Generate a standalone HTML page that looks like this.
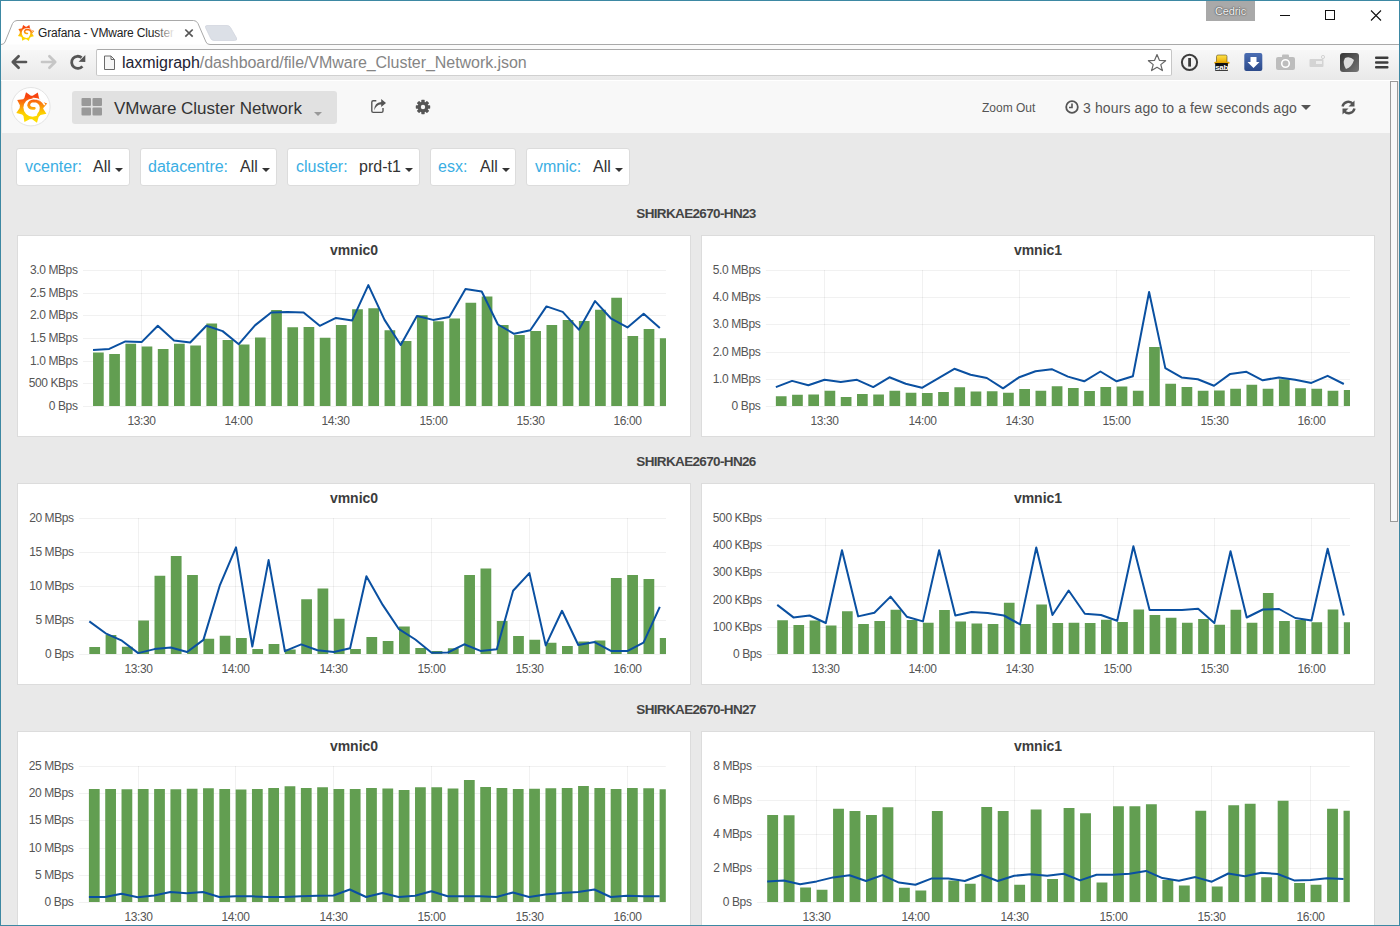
<!DOCTYPE html>
<html><head><meta charset="utf-8">
<style>
html,body{margin:0;padding:0;}
body{width:1400px;height:926px;overflow:hidden;position:relative;background:#fff;font-family:"Liberation Sans",sans-serif;}
.a{position:absolute;}
#win{left:0;top:0;width:1398px;height:924px;border:1px solid #2b7795;}
#toolbar{left:1px;top:44px;width:1398px;height:36px;background:linear-gradient(#fafafa,#e9e9e9);}
#tbline{left:1px;top:80px;width:1398px;height:1px;background:#a3a3a3;}
#addr{left:96px;top:49px;width:1075.5px;height:27px;background:#fff;border:1px solid #c6c6c6;border-top-color:#a9a9a9;border-bottom-color:#d0d0d0;border-radius:2px;box-sizing:border-box;}
#url{left:122px;top:54px;font-size:16px;color:#858585;white-space:nowrap;letter-spacing:-0.05px;}
#url b{font-weight:normal;color:#222233;}
#nav{left:1px;top:81px;width:1389px;height:52px;background:#f8f8f8;}
#dash{left:1px;top:133px;width:1389px;height:792px;background:#e9e9e9;}
#sb{left:1390px;top:81px;width:9px;height:844px;background:#e9e9e9;}
#thumb{left:1390px;top:81px;width:8px;height:441px;background:#f8f8f8;border:1px solid #9a9a9a;border-left-width:1px;box-sizing:border-box;}
.var{top:148px;height:38px;background:#fff;border:1px solid #dcdcdc;border-radius:3px;box-sizing:border-box;font-size:16px;white-space:nowrap;}
.var .l{position:absolute;top:9px;color:#3aaee3;}
.var .v{position:absolute;top:9px;color:#333;}
.caret{position:absolute;width:0;height:0;border-left:4px solid transparent;border-right:4px solid transparent;border-top:4px solid #333;}
svg text{font-family:"Liberation Sans",sans-serif;}
.pt{font-size:14px;font-weight:bold;fill:#3c3c3c;}
.yl{font-size:12px;fill:#555;letter-spacing:-0.4px;}
.g{stroke:rgba(0,0,0,0.056);stroke-width:1;}
.st{font-size:13.5px;font-weight:bold;fill:#444;letter-spacing:-0.65px;}
</style></head><body>
<div class="a" id="win"></div>
<!-- title bar & tabs -->
<div class="a" id="toolbar"></div>
<svg class="a" style="left:0;top:0" width="1400" height="50">
  <path d="M1 44.5 Q4 44.5 5 42 L12.5 23.5 Q14 20.5 17 20.5 H193.5 Q196.5 20.5 198 23.5 L206 42 Q207 44.5 210 44.5 H1399 V60 H1 Z" fill="#fbfbfb" stroke="none"/>
  <path d="M1 44.5 Q4 44.5 5 42 L12.5 23.5 Q14 20.5 17 20.5 H193.5 Q196.5 20.5 198 23.5 L206 42 Q207 44.5 210 44.5 H1399" fill="#fff" stroke="#a9a9a9" stroke-width="1"/>
  <path d="M207 25.5 H227 Q229.5 25.5 230.5 27.5 L236.5 38 Q237.5 40.5 234.5 40.5 H214 Q211.5 40.5 210.5 38 L205.5 27.5 Q205 25.5 207 25.5 Z" fill="#dce0e7" stroke="#d2d6de" stroke-width="0.8"/>
  <rect x="1206" y="1" width="49" height="20" fill="#a9a9a9"/>
    <line x1="1280" x2="1290" y1="15.5" y2="15.5" stroke="#111" stroke-width="1"/>
  <rect x="1325.5" y="10.5" width="9" height="9" fill="none" stroke="#111" stroke-width="1"/>
  <path d="M1371 10.5 L1381 20.5 M1381 10.5 L1371 20.5" stroke="#111" stroke-width="1.1"/>
</svg>
<div class="a" style="left:1206px;top:5px;width:49px;text-align:center;font-size:11px;letter-spacing:-0.1px;color:#f4f4f4;text-shadow:0 0 2px #555,0 0 1px #333;">Cedric</div>
<div class="a" style="left:38px;top:26px;font-size:12px;color:#222;white-space:nowrap;width:138px;overflow:hidden;letter-spacing:-0.15px;">Grafana - VMware Cluster</div>
<div class="a" style="left:155px;top:24px;width:22px;height:18px;background:linear-gradient(90deg,rgba(255,255,255,0),#fff 90%);"></div>
<svg class="a" style="left:183px;top:27px" width="12" height="12"><path d="M2.3 2.5 L9.7 9.7 M9.7 2.5 L2.3 9.7" stroke="#555" stroke-width="1.7"/></svg>
<svg class="a" style="left:17px;top:24px" width="18" height="18" viewBox="4.5 4.5 34 34">
<defs><linearGradient id="gf1" gradientUnits="userSpaceOnUse" x1="0" y1="6" x2="0" y2="37"><stop offset="0.15" stop-color="#f8440f"/><stop offset="0.42" stop-color="#fb8a0c"/><stop offset="0.68" stop-color="#fcd000"/><stop offset="1" stop-color="#fde000"/></linearGradient></defs>
<path d="M9.9 19.2 L7.2 13.9 L13.2 13.2 L14.4 12.1 L16.0 6.3 L20.9 9.7 L22.7 9.8 L27.8 6.6 L29.1 12.5 L31.6 15.4 L37.2 17.6 L33.3 22.1 L33.2 22.7 L36.4 27.8 L30.5 29.1 L28.6 30.9 L27.0 36.7 L22.1 33.3 L19.7 33.2 L14.4 36.1 L13.5 30.1 L12.1 28.6 L6.3 27.0 L9.7 22.1Z" fill="url(#gf1)"/>
<circle cx="22.6" cy="21.6" r="9.2" fill="#fff"/>
<path d="M22.6 12.6 Q30.5 12 34.8 19" fill="none" stroke="#fff" stroke-width="1.5"/>
<path d="M24.3 22.3 Q19.5 23 18.6 19.2 Q19.5 15 23.5 14.9 Q30.5 15 31.2 21.5 Q31.2 26 28.5 28.5" fill="none" stroke="url(#gf1)" stroke-width="2.8" stroke-linecap="round"/>
</svg>
<!-- nav buttons -->
<svg class="a" style="left:0;top:44px" width="100" height="36">
  <path d="M13.5 18 H26 M18.6 12.2 L12.8 18 L18.6 23.8" fill="none" stroke="#555" stroke-width="2.7" stroke-linecap="round" stroke-linejoin="round"/>
  <path d="M42 18 H54.5 M49.4 12.2 L55.2 18 L49.4 23.8" fill="none" stroke="#c6c6c6" stroke-width="2.7" stroke-linecap="round" stroke-linejoin="round"/>
  <path d="M81.6 13.6 A6.1 6.1 0 1 0 82.4 22.3" fill="none" stroke="#555" stroke-width="2.8"/>
  <path d="M78.6 17.7 L85.3 11 L85.3 17.9 Z" fill="#555"/>
</svg>
<div class="a" id="addr"></div>
<svg class="a" style="left:102px;top:53px" width="16" height="20">
  <path d="M2.5 3 H9 L12.5 6.5 V16.5 H2.5 Z" fill="#f6f6f6" stroke="#6a6a6a" stroke-width="1"/>
  <path d="M9 3 V6.5 H12.5" fill="none" stroke="#6a6a6a" stroke-width="1"/>
</svg>
<div class="a" id="url"><b>laxmigraph</b>/dashboard/file/VMware_Cluster_Network.json</div>
<svg class="a" style="left:1146px;top:52px" width="22" height="22">
  <path d="M11 2.5 L13.4 8.3 L19.6 8.7 L14.8 12.6 L16.4 18.6 L11 15.3 L5.6 18.6 L7.2 12.6 L2.4 8.7 L8.6 8.3 Z" fill="#fff" stroke="#666" stroke-width="1.2" stroke-linejoin="round"/>
</svg>
<!-- extension icons -->
<svg class="a" style="left:1170px;top:44px" width="230" height="36">
  <circle cx="19.5" cy="18.3" r="7.6" fill="none" stroke="#3c3c3c" stroke-width="2"/>
  <rect x="18.2" y="14" width="2.8" height="8.6" fill="#3c3c3c"/>
  <defs><linearGradient id="sy" x1="0" y1="0" x2="0" y2="1"><stop offset="0" stop-color="#ffe34a"/><stop offset="1" stop-color="#e8a800"/></linearGradient></defs>
  <path d="M46.5 19 V12.5 Q46.5 11 48 11 H55.5 Q57 11 57 12.5 V19 Z" fill="url(#sy)" stroke="#3a2a00" stroke-width="0.5"/>
  <rect x="44.2" y="17.8" width="15.4" height="2" rx="1" fill="#e0a000"/>
  <rect x="45.2" y="19" width="12.7" height="7.8" fill="#111"/>
  <text x="51.6" y="25.6" text-anchor="middle" font-size="8" font-weight="bold" fill="#fff" letter-spacing="-0.3">sab</text>
  <defs><linearGradient id="bl" x1="0" y1="0" x2="0" y2="1"><stop offset="0" stop-color="#4a6db3"/><stop offset="1" stop-color="#2c4a8a"/></linearGradient><linearGradient id="dk" x1="0" y1="0" x2="1" y2="1"><stop offset="0" stop-color="#333"/><stop offset="1" stop-color="#777"/></linearGradient></defs><rect x="74.3" y="9" width="18" height="18" rx="2" fill="url(#bl)"/>
  <path d="M80.5 13 H86.5 V18 H89.5 L83.5 24 L77.5 18 H80.5 Z" fill="#fff"/>
  <rect x="106" y="13" width="19" height="13" rx="2" fill="#bdbdbd"/>
  <rect x="112" y="10.5" width="7" height="4" rx="1" fill="#bdbdbd"/>
  <circle cx="115.5" cy="19.5" r="3.8" fill="none" stroke="#fff" stroke-width="1.6"/>
  <rect x="139.5" y="15" width="14" height="8" rx="1" fill="#d4d4d4"/>
  <rect x="146" y="17" width="6" height="3" fill="#eee"/>
  <circle cx="153" cy="13" r="1.6" fill="none" stroke="#d4d4d4" stroke-width="1"/>
  <rect x="170" y="9" width="19" height="19" rx="3" fill="url(#dk)"/>
  <path d="M175 14 Q180 12 184 16 Q182 23 176 25 Q172 19 175 14 Z" fill="#ddd"/>
  <rect x="205" y="12.5" width="13.5" height="2.5" rx="1" fill="#3c3c3c"/>
  <rect x="205" y="17.3" width="13.5" height="2.5" rx="1" fill="#3c3c3c"/>
  <rect x="205" y="22.1" width="13.5" height="2.5" rx="1" fill="#3c3c3c"/>
</svg>
<!-- grafana navbar -->
<div class="a" id="nav"></div>
<svg class="a" style="left:10px;top:86px" width="42" height="42" viewBox="0 0 42 42">
  <circle cx="20.9" cy="20.7" r="19.2" fill="#fff" stroke="#e4e4e4" stroke-width="1"/>
<defs><linearGradient id="gf2" gradientUnits="userSpaceOnUse" x1="0" y1="6" x2="0" y2="37"><stop offset="0.15" stop-color="#f8440f"/><stop offset="0.42" stop-color="#fb8a0c"/><stop offset="0.68" stop-color="#fcd000"/><stop offset="1" stop-color="#fde000"/></linearGradient></defs>
<path d="M9.9 19.2 L7.2 13.9 L13.2 13.2 L14.4 12.1 L16.0 6.3 L20.9 9.7 L22.7 9.8 L27.8 6.6 L29.1 12.5 L31.6 15.4 L37.2 17.6 L33.3 22.1 L33.2 22.7 L36.4 27.8 L30.5 29.1 L28.6 30.9 L27.0 36.7 L22.1 33.3 L19.7 33.2 L14.4 36.1 L13.5 30.1 L12.1 28.6 L6.3 27.0 L9.7 22.1Z" fill="url(#gf2)"/>
<circle cx="22.6" cy="21.6" r="9.2" fill="#fff"/>
<path d="M22.6 12.6 Q30.5 12 34.8 19" fill="none" stroke="#fff" stroke-width="1.5"/>
<path d="M24.3 22.3 Q19.5 23 18.6 19.2 Q19.5 15 23.5 14.9 Q30.5 15 31.2 21.5 Q31.2 26 28.5 28.5" fill="none" stroke="url(#gf2)" stroke-width="2.8" stroke-linecap="round"/>
</svg>
<div class="a" style="left:72px;top:91px;width:265px;height:33px;background:#e1e1e1;border-radius:3px;"></div>
<svg class="a" style="left:81px;top:97px" width="24" height="20">
  <rect x="0.5" y="1" width="9.5" height="8" rx="1" fill="#999"/>
  <rect x="11.5" y="1" width="9.5" height="8" rx="1" fill="#999"/>
  <rect x="0.5" y="10.5" width="9.5" height="8" rx="1" fill="#999"/>
  <rect x="11.5" y="10.5" width="9.5" height="8" rx="1" fill="#999"/>
</svg>
<div class="a" style="left:114px;top:99px;font-size:17px;color:#333;white-space:nowrap;">VMware Cluster Network</div>
<div class="caret a" style="left:314px;top:111.5px;border-top-color:#999;border-left-width:4px;border-right-width:4px;border-top-width:4px;"></div>
<svg class="a" style="left:368px;top:97px" width="20" height="20">
  <path d="M8.3 3.8 H5.2 Q3.8 3.8 3.8 5.2 V14 Q3.8 15.4 5.2 15.4 H13.6 Q15 15.4 15 14 V11" fill="none" stroke="#555" stroke-width="1.4"/>
  <path d="M6.2 13.4 Q6.3 5.6 13.2 5.1 V2.1 L18 6.1 L13.2 10.1 V7.5 Q8.6 7.4 6.2 13.4 Z" fill="#555"/>
</svg>
<svg class="a" style="left:414px;top:98px" width="18" height="18" viewBox="0 0 18 18">
  <g fill="#555" transform="translate(9 9)">
    <circle r="5.3"/>
    <rect x="-1.7" y="-7.2" width="3.4" height="14.4" rx="0.6"/>
    <rect x="-1.7" y="-7.2" width="3.4" height="14.4" rx="0.6" transform="rotate(45)"/>
    <rect x="-1.7" y="-7.2" width="3.4" height="14.4" rx="0.6" transform="rotate(90)"/>
    <rect x="-1.7" y="-7.2" width="3.4" height="14.4" rx="0.6" transform="rotate(135)"/>
  </g>
  <circle cx="9" cy="9" r="2.2" fill="#f8f8f8"/>
</svg>
<div class="a" style="left:982px;top:101px;font-size:12px;color:#555;white-space:nowrap;">Zoom Out</div>
<svg class="a" style="left:1064px;top:99px" width="16" height="16">
  <circle cx="8" cy="8" r="5.8" fill="none" stroke="#555" stroke-width="1.8"/>
  <path d="M8 4.5 V8.5 H5" fill="none" stroke="#555" stroke-width="1.6"/>
</svg>
<div class="a" style="left:1083px;top:100px;font-size:14px;color:#555;white-space:nowrap;letter-spacing:0.12px;">3 hours ago to a few seconds ago</div>
<div class="caret a" style="left:1301px;top:105px;border-left-width:5px;border-right-width:5px;border-top-width:5px;border-top-color:#555;"></div>
<svg class="a" style="left:1340px;top:99px" width="17" height="17" viewBox="0 0 17 17">
  <path d="M2.5 7.5 A6 6 0 0 1 13 5" fill="none" stroke="#555" stroke-width="2.4"/>
  <path d="M14.5 1.5 V7.5 H8.5 Z" fill="#555"/>
  <path d="M14.5 9.5 A6 6 0 0 1 4 12" fill="none" stroke="#555" stroke-width="2.4"/>
  <path d="M2.5 15.5 V9.5 H8.5 Z" fill="#555"/>
</svg>
<!-- dashboard -->
<div class="a" id="dash"></div>
<div class="a var" style="left:16px;width:114px;"><span class="l" style="left:8px">vcenter:</span><span class="v" style="left:76px">All</span><div class="caret" style="left:98px;top:19px"></div></div>
<div class="a var" style="left:140px;width:137px;"><span class="l" style="left:7px">datacentre:</span><span class="v" style="left:99px">All</span><div class="caret" style="left:121px;top:19px"></div></div>
<div class="a var" style="left:287px;width:133px;"><span class="l" style="left:8px">cluster:</span><span class="v" style="left:71px">prd-t1</span><div class="caret" style="left:117px;top:19px"></div></div>
<div class="a var" style="left:430px;width:86px;"><span class="l" style="left:7px">esx:</span><span class="v" style="left:49px">All</span><div class="caret" style="left:71px;top:19px"></div></div>
<div class="a var" style="left:526px;width:104px;"><span class="l" style="left:8px">vmnic:</span><span class="v" style="left:66px">All</span><div class="caret" style="left:88px;top:19px"></div></div>
<svg class="a" style="left:0;top:0" width="1390" height="926">
<text x="696" y="218" class="st" text-anchor="middle">SHIRKAE2670-HN23</text>
<text x="696" y="466" class="st" text-anchor="middle">SHIRKAE2670-HN26</text>
<text x="696" y="714" class="st" text-anchor="middle">SHIRKAE2670-HN27</text>
<rect x="17.5" y="235.5" width="673" height="201.0" fill="#fff" stroke="#dcdcdc" stroke-width="1"/>
<text x="354.0" y="255.0" class="pt" text-anchor="middle">vmnic0</text>
<line x1="83" x2="666" y1="270.5" y2="270.5" class="g"/>
<text x="77.5" y="273.8" class="yl" text-anchor="end">3.0 MBps</text>
<line x1="83" x2="666" y1="293.5" y2="293.5" class="g"/>
<text x="77.5" y="296.8" class="yl" text-anchor="end">2.5 MBps</text>
<line x1="83" x2="666" y1="315.5" y2="315.5" class="g"/>
<text x="77.5" y="318.8" class="yl" text-anchor="end">2.0 MBps</text>
<line x1="83" x2="666" y1="338.5" y2="338.5" class="g"/>
<text x="77.5" y="341.8" class="yl" text-anchor="end">1.5 MBps</text>
<line x1="83" x2="666" y1="361.5" y2="361.5" class="g"/>
<text x="77.5" y="364.8" class="yl" text-anchor="end">1.0 MBps</text>
<line x1="83" x2="666" y1="383.5" y2="383.5" class="g"/>
<text x="77.5" y="386.8" class="yl" text-anchor="end">500 KBps</text>
<line x1="83" x2="666" y1="406.5" y2="406.5" class="g"/>
<text x="77.5" y="409.8" class="yl" text-anchor="end">0 Bps</text>
<line x1="141.5" x2="141.5" y1="270" y2="406" class="g"/>
<text x="141.5" y="425" class="yl" text-anchor="middle">13:30</text>
<line x1="238.5" x2="238.5" y1="270" y2="406" class="g"/>
<text x="238.5" y="425" class="yl" text-anchor="middle">14:00</text>
<line x1="335.5" x2="335.5" y1="270" y2="406" class="g"/>
<text x="335.5" y="425" class="yl" text-anchor="middle">14:30</text>
<line x1="433.5" x2="433.5" y1="270" y2="406" class="g"/>
<text x="433.5" y="425" class="yl" text-anchor="middle">15:00</text>
<line x1="530.5" x2="530.5" y1="270" y2="406" class="g"/>
<text x="530.5" y="425" class="yl" text-anchor="middle">15:30</text>
<line x1="627.5" x2="627.5" y1="270" y2="406" class="g"/>
<text x="627.5" y="425" class="yl" text-anchor="middle">16:00</text>
<path d="M93.04 352.60h10.69V406h-10.69ZM109.23 353.90h10.69V406h-10.69ZM125.43 343.80h10.69V406h-10.69ZM141.62 346.40h10.69V406h-10.69ZM157.82 349.10h10.69V406h-10.69ZM174.01 343.80h10.69V406h-10.69ZM190.21 345.50h10.69V406h-10.69ZM206.40 323.60h10.69V406h-10.69ZM222.60 340.10h10.69V406h-10.69ZM238.79 344.40h10.69V406h-10.69ZM254.99 337.60h10.69V406h-10.69ZM271.18 309.90h10.69V406h-10.69ZM287.37 327.30h10.69V406h-10.69ZM303.57 326.90h10.69V406h-10.69ZM319.76 337.80h10.69V406h-10.69ZM335.96 325.10h10.69V406h-10.69ZM352.15 309.30h10.69V406h-10.69ZM368.35 308.20h10.69V406h-10.69ZM384.54 330.20h10.69V406h-10.69ZM400.74 340.90h10.69V406h-10.69ZM416.93 315.30h10.69V406h-10.69ZM433.12 321.30h10.69V406h-10.69ZM449.32 318.50h10.69V406h-10.69ZM465.51 302.70h10.69V406h-10.69ZM481.71 296.60h10.69V406h-10.69ZM497.90 325.10h10.69V406h-10.69ZM514.10 335.00h10.69V406h-10.69ZM530.29 331.10h10.69V406h-10.69ZM546.49 324.90h10.69V406h-10.69ZM562.68 320.10h10.69V406h-10.69ZM578.87 321.00h10.69V406h-10.69ZM595.07 309.80h10.69V406h-10.69ZM611.26 297.70h10.69V406h-10.69ZM627.46 336.10h10.69V406h-10.69ZM643.65 329.00h10.69V406h-10.69ZM659.85 338.20h6.15V406h-6.15Z" fill="#629e51"/>
<polyline points="93.04,350.00 109.23,348.90 125.43,341.40 141.62,342.10 157.82,325.80 174.01,340.40 190.21,342.50 206.40,325.80 222.60,331.10 238.79,344.20 254.99,325.40 271.18,312.50 287.37,312.10 303.57,312.50 319.76,325.80 335.96,317.90 352.15,320.40 368.35,285.10 384.54,319.90 400.74,345.00 416.93,316.00 433.12,319.90 449.32,317.10 465.51,289.00 481.71,291.50 497.90,324.50 514.10,333.80 530.29,330.20 546.49,306.40 562.68,311.90 578.87,329.70 595.07,301.10 611.26,318.70 627.46,327.40 643.65,313.70 659.85,327.90" fill="none" stroke="#0a50a1" stroke-width="2" stroke-linejoin="round"/>
<rect x="701.5" y="235.5" width="673" height="201.0" fill="#fff" stroke="#dcdcdc" stroke-width="1"/>
<text x="1038.0" y="255.0" class="pt" text-anchor="middle">vmnic1</text>
<line x1="765.8" x2="1350" y1="270.5" y2="270.5" class="g"/>
<text x="760.3" y="273.8" class="yl" text-anchor="end">5.0 MBps</text>
<line x1="765.8" x2="1350" y1="297.5" y2="297.5" class="g"/>
<text x="760.3" y="300.8" class="yl" text-anchor="end">4.0 MBps</text>
<line x1="765.8" x2="1350" y1="324.5" y2="324.5" class="g"/>
<text x="760.3" y="327.8" class="yl" text-anchor="end">3.0 MBps</text>
<line x1="765.8" x2="1350" y1="352.5" y2="352.5" class="g"/>
<text x="760.3" y="355.8" class="yl" text-anchor="end">2.0 MBps</text>
<line x1="765.8" x2="1350" y1="379.5" y2="379.5" class="g"/>
<text x="760.3" y="382.8" class="yl" text-anchor="end">1.0 MBps</text>
<line x1="765.8" x2="1350" y1="406.5" y2="406.5" class="g"/>
<text x="760.3" y="409.8" class="yl" text-anchor="end">0 Bps</text>
<line x1="824.5" x2="824.5" y1="270" y2="406" class="g"/>
<text x="824.5" y="425" class="yl" text-anchor="middle">13:30</text>
<line x1="922.5" x2="922.5" y1="270" y2="406" class="g"/>
<text x="922.5" y="425" class="yl" text-anchor="middle">14:00</text>
<line x1="1019.5" x2="1019.5" y1="270" y2="406" class="g"/>
<text x="1019.5" y="425" class="yl" text-anchor="middle">14:30</text>
<line x1="1116.5" x2="1116.5" y1="270" y2="406" class="g"/>
<text x="1116.5" y="425" class="yl" text-anchor="middle">15:00</text>
<line x1="1214.5" x2="1214.5" y1="270" y2="406" class="g"/>
<text x="1214.5" y="425" class="yl" text-anchor="middle">15:30</text>
<line x1="1311.5" x2="1311.5" y1="270" y2="406" class="g"/>
<text x="1311.5" y="425" class="yl" text-anchor="middle">16:00</text>
<path d="M775.86 396.30h10.71V406h-10.71ZM792.09 394.70h10.71V406h-10.71ZM808.32 394.40h10.71V406h-10.71ZM824.54 390.80h10.71V406h-10.71ZM840.77 396.90h10.71V406h-10.71ZM857.00 394.00h10.71V406h-10.71ZM873.23 394.40h10.71V406h-10.71ZM889.46 390.80h10.71V406h-10.71ZM905.68 392.80h10.71V406h-10.71ZM921.91 393.10h10.71V406h-10.71ZM938.14 392.10h10.71V406h-10.71ZM954.37 387.30h10.71V406h-10.71ZM970.59 391.50h10.71V406h-10.71ZM986.82 391.20h10.71V406h-10.71ZM1003.05 392.80h10.71V406h-10.71ZM1019.28 389.10h10.71V406h-10.71ZM1035.51 390.80h10.71V406h-10.71ZM1051.73 386.30h10.71V406h-10.71ZM1067.96 387.90h10.71V406h-10.71ZM1084.19 391.10h10.71V406h-10.71ZM1100.42 386.90h10.71V406h-10.71ZM1116.64 386.60h10.71V406h-10.71ZM1132.87 390.80h10.71V406h-10.71ZM1149.10 347.00h10.71V406h-10.71ZM1165.33 383.70h10.71V406h-10.71ZM1181.56 386.90h10.71V406h-10.71ZM1197.78 390.80h10.71V406h-10.71ZM1214.01 390.60h10.71V406h-10.71ZM1230.24 388.70h10.71V406h-10.71ZM1246.47 384.80h10.71V406h-10.71ZM1262.69 388.70h10.71V406h-10.71ZM1278.92 379.20h10.71V406h-10.71ZM1295.15 388.20h10.71V406h-10.71ZM1311.38 388.70h10.71V406h-10.71ZM1327.61 390.80h10.71V406h-10.71ZM1343.83 390.00h6.17V406h-6.17Z" fill="#629e51"/>
<polyline points="775.86,387.10 792.09,380.90 808.32,385.30 824.54,379.80 840.77,382.10 857.00,379.80 873.23,387.10 889.46,377.30 905.68,383.70 921.91,387.80 938.14,378.40 954.37,368.80 970.59,374.80 986.82,378.00 1003.05,388.30 1019.28,377.20 1035.51,371.30 1051.73,369.20 1067.96,376.60 1084.19,381.30 1100.42,371.50 1116.64,381.30 1132.87,376.30 1149.10,292.00 1165.33,368.10 1181.56,377.40 1197.78,379.20 1214.01,385.80 1230.24,373.90 1246.47,371.80 1262.69,380.30 1278.92,377.40 1295.15,379.70 1311.38,382.90 1327.61,375.80 1343.83,384.00" fill="none" stroke="#0a50a1" stroke-width="2" stroke-linejoin="round"/>
<rect x="17.5" y="483.5" width="673" height="201.0" fill="#fff" stroke="#dcdcdc" stroke-width="1"/>
<text x="354.0" y="503.0" class="pt" text-anchor="middle">vmnic0</text>
<line x1="79.2" x2="666" y1="518.5" y2="518.5" class="g"/>
<text x="73.7" y="521.8" class="yl" text-anchor="end">20 MBps</text>
<line x1="79.2" x2="666" y1="552.5" y2="552.5" class="g"/>
<text x="73.7" y="555.8" class="yl" text-anchor="end">15 MBps</text>
<line x1="79.2" x2="666" y1="586.5" y2="586.5" class="g"/>
<text x="73.7" y="589.8" class="yl" text-anchor="end">10 MBps</text>
<line x1="79.2" x2="666" y1="620.5" y2="620.5" class="g"/>
<text x="73.7" y="623.8" class="yl" text-anchor="end">5 MBps</text>
<line x1="79.2" x2="666" y1="654.5" y2="654.5" class="g"/>
<text x="73.7" y="657.8" class="yl" text-anchor="end">0 Bps</text>
<line x1="138.5" x2="138.5" y1="518" y2="654" class="g"/>
<text x="138.5" y="673" class="yl" text-anchor="middle">13:30</text>
<line x1="235.5" x2="235.5" y1="518" y2="654" class="g"/>
<text x="235.5" y="673" class="yl" text-anchor="middle">14:00</text>
<line x1="333.5" x2="333.5" y1="518" y2="654" class="g"/>
<text x="333.5" y="673" class="yl" text-anchor="middle">14:30</text>
<line x1="431.5" x2="431.5" y1="518" y2="654" class="g"/>
<text x="431.5" y="673" class="yl" text-anchor="middle">15:00</text>
<line x1="529.5" x2="529.5" y1="518" y2="654" class="g"/>
<text x="529.5" y="673" class="yl" text-anchor="middle">15:30</text>
<line x1="627.5" x2="627.5" y1="518" y2="654" class="g"/>
<text x="627.5" y="673" class="yl" text-anchor="middle">16:00</text>
<path d="M89.31 647.00h10.76V654h-10.76ZM105.61 634.90h10.76V654h-10.76ZM121.91 646.80h10.76V654h-10.76ZM138.21 620.60h10.76V654h-10.76ZM154.51 575.70h10.76V654h-10.76ZM170.81 556.10h10.76V654h-10.76ZM187.11 575.10h10.76V654h-10.76ZM203.41 638.80h10.76V654h-10.76ZM219.71 635.70h10.76V654h-10.76ZM236.01 638.00h10.76V654h-10.76ZM252.31 648.90h10.76V654h-10.76ZM268.61 644.10h10.76V654h-10.76ZM284.91 649.40h10.76V654h-10.76ZM301.21 599.20h10.76V654h-10.76ZM317.51 588.60h10.76V654h-10.76ZM333.81 618.70h10.76V654h-10.76ZM350.11 648.90h10.76V654h-10.76ZM366.41 637.00h10.76V654h-10.76ZM382.71 641.00h10.76V654h-10.76ZM399.01 626.60h10.76V654h-10.76ZM415.31 648.00h10.76V654h-10.76ZM431.61 650.90h10.76V654h-10.76ZM447.91 648.30h10.76V654h-10.76ZM464.21 575.00h10.76V654h-10.76ZM480.51 568.40h10.76V654h-10.76ZM496.81 620.90h10.76V654h-10.76ZM513.11 636.00h10.76V654h-10.76ZM529.41 639.80h10.76V654h-10.76ZM545.71 642.80h10.76V654h-10.76ZM562.01 645.90h10.76V654h-10.76ZM578.31 641.40h10.76V654h-10.76ZM594.61 640.50h10.76V654h-10.76ZM610.91 578.00h10.76V654h-10.76ZM627.21 575.00h10.76V654h-10.76ZM643.51 579.00h10.76V654h-10.76ZM659.81 638.10h6.19V654h-6.19Z" fill="#629e51"/>
<polyline points="89.31,621.40 105.61,633.30 121.91,640.70 138.21,653.10 154.51,649.10 170.81,647.50 187.11,652.00 203.41,639.90 219.71,585.70 236.01,547.40 252.31,646.50 268.61,560.10 284.91,651.20 301.21,644.40 317.51,650.20 333.81,652.00 350.11,648.30 366.41,576.30 382.71,604.90 399.01,629.20 415.31,639.50 431.61,652.70 447.91,652.50 464.21,644.30 480.51,650.90 496.81,649.20 513.11,590.80 529.41,573.10 545.71,645.40 562.01,610.80 578.31,645.00 594.61,642.10 610.91,650.90 627.21,651.10 643.51,642.60 659.81,606.80" fill="none" stroke="#0a50a1" stroke-width="2" stroke-linejoin="round"/>
<rect x="701.5" y="483.5" width="673" height="201.0" fill="#fff" stroke="#dcdcdc" stroke-width="1"/>
<text x="1038.0" y="503.0" class="pt" text-anchor="middle">vmnic1</text>
<line x1="767.2" x2="1350" y1="518.5" y2="518.5" class="g"/>
<text x="761.7" y="521.8" class="yl" text-anchor="end">500 KBps</text>
<line x1="767.2" x2="1350" y1="545.5" y2="545.5" class="g"/>
<text x="761.7" y="548.8" class="yl" text-anchor="end">400 KBps</text>
<line x1="767.2" x2="1350" y1="572.5" y2="572.5" class="g"/>
<text x="761.7" y="575.8" class="yl" text-anchor="end">300 KBps</text>
<line x1="767.2" x2="1350" y1="600.5" y2="600.5" class="g"/>
<text x="761.7" y="603.8" class="yl" text-anchor="end">200 KBps</text>
<line x1="767.2" x2="1350" y1="627.5" y2="627.5" class="g"/>
<text x="761.7" y="630.8" class="yl" text-anchor="end">100 KBps</text>
<line x1="767.2" x2="1350" y1="654.5" y2="654.5" class="g"/>
<text x="761.7" y="657.8" class="yl" text-anchor="end">0 Bps</text>
<line x1="825.5" x2="825.5" y1="518" y2="654" class="g"/>
<text x="825.5" y="673" class="yl" text-anchor="middle">13:30</text>
<line x1="922.5" x2="922.5" y1="518" y2="654" class="g"/>
<text x="922.5" y="673" class="yl" text-anchor="middle">14:00</text>
<line x1="1019.5" x2="1019.5" y1="518" y2="654" class="g"/>
<text x="1019.5" y="673" class="yl" text-anchor="middle">14:30</text>
<line x1="1117.5" x2="1117.5" y1="518" y2="654" class="g"/>
<text x="1117.5" y="673" class="yl" text-anchor="middle">15:00</text>
<line x1="1214.5" x2="1214.5" y1="518" y2="654" class="g"/>
<text x="1214.5" y="673" class="yl" text-anchor="middle">15:30</text>
<line x1="1311.5" x2="1311.5" y1="518" y2="654" class="g"/>
<text x="1311.5" y="673" class="yl" text-anchor="middle">16:00</text>
<path d="M777.24 620.20h10.68V654h-10.68ZM793.43 624.90h10.68V654h-10.68ZM809.61 620.40h10.68V654h-10.68ZM825.80 625.60h10.68V654h-10.68ZM841.99 611.30h10.68V654h-10.68ZM858.18 624.00h10.68V654h-10.68ZM874.37 620.90h10.68V654h-10.68ZM890.56 609.80h10.68V654h-10.68ZM906.75 620.00h10.68V654h-10.68ZM922.94 622.80h10.68V654h-10.68ZM939.13 610.10h10.68V654h-10.68ZM955.31 621.40h10.68V654h-10.68ZM971.50 623.50h10.68V654h-10.68ZM987.69 624.00h10.68V654h-10.68ZM1003.88 602.80h10.68V654h-10.68ZM1020.07 624.10h10.68V654h-10.68ZM1036.26 604.50h10.68V654h-10.68ZM1052.45 623.00h10.68V654h-10.68ZM1068.64 622.80h10.68V654h-10.68ZM1084.83 623.00h10.68V654h-10.68ZM1101.01 619.80h10.68V654h-10.68ZM1117.20 622.00h10.68V654h-10.68ZM1133.39 609.50h10.68V654h-10.68ZM1149.58 615.00h10.68V654h-10.68ZM1165.77 617.80h10.68V654h-10.68ZM1181.96 622.80h10.68V654h-10.68ZM1198.15 619.00h10.68V654h-10.68ZM1214.34 624.80h10.68V654h-10.68ZM1230.53 609.80h10.68V654h-10.68ZM1246.71 622.80h10.68V654h-10.68ZM1262.90 593.00h10.68V654h-10.68ZM1279.09 621.00h10.68V654h-10.68ZM1295.28 620.00h10.68V654h-10.68ZM1311.47 622.30h10.68V654h-10.68ZM1327.66 609.50h10.68V654h-10.68ZM1343.85 622.30h6.15V654h-6.15Z" fill="#629e51"/>
<polyline points="777.24,604.90 793.43,617.40 809.61,615.50 825.80,623.00 841.99,550.20 858.18,616.40 874.37,612.70 890.56,596.60 906.75,616.70 922.94,621.40 939.13,550.20 955.31,615.50 971.50,612.00 987.69,613.10 1003.88,615.50 1020.07,624.40 1036.26,547.50 1052.45,615.00 1068.64,590.50 1084.83,613.80 1101.01,615.00 1117.20,620.80 1133.39,546.30 1149.58,610.00 1165.77,610.00 1181.96,610.00 1198.15,608.80 1214.34,623.00 1230.53,551.30 1246.71,617.50 1262.90,609.50 1279.09,609.00 1295.28,618.00 1311.47,620.50 1327.66,548.80 1343.85,615.50" fill="none" stroke="#0a50a1" stroke-width="2" stroke-linejoin="round"/>
<rect x="17.5" y="731.5" width="673" height="208.5" fill="#fff" stroke="#dcdcdc" stroke-width="1"/>
<text x="354.0" y="751.0" class="pt" text-anchor="middle">vmnic0</text>
<line x1="78.8" x2="665.8" y1="766.5" y2="766.5" class="g"/>
<text x="73.3" y="769.8" class="yl" text-anchor="end">25 MBps</text>
<line x1="78.8" x2="665.8" y1="793.5" y2="793.5" class="g"/>
<text x="73.3" y="796.8" class="yl" text-anchor="end">20 MBps</text>
<line x1="78.8" x2="665.8" y1="820.5" y2="820.5" class="g"/>
<text x="73.3" y="823.8" class="yl" text-anchor="end">15 MBps</text>
<line x1="78.8" x2="665.8" y1="848.5" y2="848.5" class="g"/>
<text x="73.3" y="851.8" class="yl" text-anchor="end">10 MBps</text>
<line x1="78.8" x2="665.8" y1="875.5" y2="875.5" class="g"/>
<text x="73.3" y="878.8" class="yl" text-anchor="end">5 MBps</text>
<line x1="78.8" x2="665.8" y1="902.5" y2="902.5" class="g"/>
<text x="73.3" y="905.8" class="yl" text-anchor="end">0 Bps</text>
<line x1="138.5" x2="138.5" y1="766" y2="902" class="g"/>
<text x="138.5" y="921" class="yl" text-anchor="middle">13:30</text>
<line x1="235.5" x2="235.5" y1="766" y2="902" class="g"/>
<text x="235.5" y="921" class="yl" text-anchor="middle">14:00</text>
<line x1="333.5" x2="333.5" y1="766" y2="902" class="g"/>
<text x="333.5" y="921" class="yl" text-anchor="middle">14:30</text>
<line x1="431.5" x2="431.5" y1="766" y2="902" class="g"/>
<text x="431.5" y="921" class="yl" text-anchor="middle">15:00</text>
<line x1="529.5" x2="529.5" y1="766" y2="902" class="g"/>
<text x="529.5" y="921" class="yl" text-anchor="middle">15:30</text>
<line x1="627.5" x2="627.5" y1="766" y2="902" class="g"/>
<text x="627.5" y="921" class="yl" text-anchor="middle">16:00</text>
<path d="M88.91 789.00h10.76V902h-10.76ZM105.22 789.00h10.76V902h-10.76ZM121.52 789.30h10.76V902h-10.76ZM137.83 789.00h10.76V902h-10.76ZM154.13 789.00h10.76V902h-10.76ZM170.44 789.30h10.76V902h-10.76ZM186.74 788.80h10.76V902h-10.76ZM203.05 788.30h10.76V902h-10.76ZM219.35 789.00h10.76V902h-10.76ZM235.66 789.50h10.76V902h-10.76ZM251.96 789.00h10.76V902h-10.76ZM268.27 788.00h10.76V902h-10.76ZM284.58 786.30h10.76V902h-10.76ZM300.88 788.00h10.76V902h-10.76ZM317.19 787.30h10.76V902h-10.76ZM333.49 789.00h10.76V902h-10.76ZM349.80 789.00h10.76V902h-10.76ZM366.10 788.00h10.76V902h-10.76ZM382.41 788.50h10.76V902h-10.76ZM398.71 790.00h10.76V902h-10.76ZM415.02 787.30h10.76V902h-10.76ZM431.33 787.30h10.76V902h-10.76ZM447.63 788.50h10.76V902h-10.76ZM463.94 780.00h10.76V902h-10.76ZM480.24 787.00h10.76V902h-10.76ZM496.55 788.00h10.76V902h-10.76ZM512.85 789.00h10.76V902h-10.76ZM529.16 788.80h10.76V902h-10.76ZM545.46 788.30h10.76V902h-10.76ZM561.77 788.00h10.76V902h-10.76ZM578.08 786.00h10.76V902h-10.76ZM594.38 788.00h10.76V902h-10.76ZM610.69 789.00h10.76V902h-10.76ZM626.99 788.00h10.76V902h-10.76ZM643.30 788.30h10.76V902h-10.76ZM659.60 789.30h6.20V902h-6.20Z" fill="#629e51"/>
<polyline points="88.91,897.00 105.22,897.00 121.52,893.80 137.83,897.30 154.13,895.50 170.44,892.00 186.74,893.30 203.05,892.00 219.35,897.00 235.66,896.30 251.96,896.30 268.27,897.00 284.58,897.00 300.88,896.30 317.19,895.80 333.49,895.50 349.80,889.50 366.10,897.00 382.41,893.00 398.71,897.00 415.02,895.80 431.33,891.30 447.63,896.30 463.94,896.30 480.24,896.30 496.55,897.00 512.85,892.50 529.16,897.00 545.46,894.50 561.77,893.00 578.08,892.00 594.38,889.50 610.69,897.00 626.99,895.80 643.30,896.30 659.60,896.30" fill="none" stroke="#0a50a1" stroke-width="2" stroke-linejoin="round"/>
<rect x="701.5" y="731.5" width="673" height="208.5" fill="#fff" stroke="#dcdcdc" stroke-width="1"/>
<text x="1038.0" y="751.0" class="pt" text-anchor="middle">vmnic1</text>
<line x1="757" x2="1349.8" y1="766.5" y2="766.5" class="g"/>
<text x="751.5" y="769.8" class="yl" text-anchor="end">8 MBps</text>
<line x1="757" x2="1349.8" y1="800.5" y2="800.5" class="g"/>
<text x="751.5" y="803.8" class="yl" text-anchor="end">6 MBps</text>
<line x1="757" x2="1349.8" y1="834.5" y2="834.5" class="g"/>
<text x="751.5" y="837.8" class="yl" text-anchor="end">4 MBps</text>
<line x1="757" x2="1349.8" y1="868.5" y2="868.5" class="g"/>
<text x="751.5" y="871.8" class="yl" text-anchor="end">2 MBps</text>
<line x1="757" x2="1349.8" y1="902.5" y2="902.5" class="g"/>
<text x="751.5" y="905.8" class="yl" text-anchor="end">0 Bps</text>
<line x1="816.5" x2="816.5" y1="766" y2="902" class="g"/>
<text x="816.5" y="921" class="yl" text-anchor="middle">13:30</text>
<line x1="915.5" x2="915.5" y1="766" y2="902" class="g"/>
<text x="915.5" y="921" class="yl" text-anchor="middle">14:00</text>
<line x1="1014.5" x2="1014.5" y1="766" y2="902" class="g"/>
<text x="1014.5" y="921" class="yl" text-anchor="middle">14:30</text>
<line x1="1113.5" x2="1113.5" y1="766" y2="902" class="g"/>
<text x="1113.5" y="921" class="yl" text-anchor="middle">15:00</text>
<line x1="1211.5" x2="1211.5" y1="766" y2="902" class="g"/>
<text x="1211.5" y="921" class="yl" text-anchor="middle">15:30</text>
<line x1="1310.5" x2="1310.5" y1="766" y2="902" class="g"/>
<text x="1310.5" y="921" class="yl" text-anchor="middle">16:00</text>
<path d="M767.21 815.00h10.87V902h-10.87ZM783.68 815.20h10.87V902h-10.87ZM800.14 887.60h10.87V902h-10.87ZM816.61 889.70h10.87V902h-10.87ZM833.08 808.80h10.87V902h-10.87ZM849.54 811.00h10.87V902h-10.87ZM866.01 815.00h10.87V902h-10.87ZM882.48 807.20h10.87V902h-10.87ZM898.94 887.80h10.87V902h-10.87ZM915.41 890.40h10.87V902h-10.87ZM931.88 811.00h10.87V902h-10.87ZM948.34 880.50h10.87V902h-10.87ZM964.81 883.80h10.87V902h-10.87ZM981.28 807.00h10.87V902h-10.87ZM997.74 811.00h10.87V902h-10.87ZM1014.21 884.80h10.87V902h-10.87ZM1030.68 809.40h10.87V902h-10.87ZM1047.14 879.10h10.87V902h-10.87ZM1063.61 807.90h10.87V902h-10.87ZM1080.08 813.30h10.87V902h-10.87ZM1096.54 882.50h10.87V902h-10.87ZM1113.01 806.30h10.87V902h-10.87ZM1129.48 806.30h10.87V902h-10.87ZM1145.94 804.30h10.87V902h-10.87ZM1162.41 880.10h10.87V902h-10.87ZM1178.88 885.50h10.87V902h-10.87ZM1195.34 810.70h10.87V902h-10.87ZM1211.81 886.60h10.87V902h-10.87ZM1228.28 805.30h10.87V902h-10.87ZM1244.74 803.80h10.87V902h-10.87ZM1261.21 877.30h10.87V902h-10.87ZM1277.68 800.70h10.87V902h-10.87ZM1294.14 883.00h10.87V902h-10.87ZM1310.61 884.80h10.87V902h-10.87ZM1327.08 808.70h10.87V902h-10.87ZM1343.54 810.70h6.26V902h-6.26Z" fill="#629e51"/>
<polyline points="767.21,881.40 783.68,880.50 800.14,884.30 816.61,881.40 833.08,877.40 849.54,875.30 866.01,881.00 882.48,875.10 898.94,882.60 915.41,884.70 931.88,878.40 948.34,878.60 964.81,881.00 981.28,874.80 997.74,881.00 1014.21,875.80 1030.68,874.20 1047.14,875.80 1063.61,873.70 1080.08,880.40 1096.54,874.70 1113.01,874.70 1129.48,873.70 1145.94,870.90 1162.41,878.10 1178.88,880.70 1195.34,877.10 1211.81,881.70 1228.28,873.50 1244.74,876.30 1261.21,872.70 1277.68,874.00 1294.14,880.40 1310.61,880.10 1327.08,878.30 1343.54,879.10" fill="none" stroke="#0a50a1" stroke-width="2" stroke-linejoin="round"/>
</svg>
<div class="a" id="sb"></div>
<div class="a" id="thumb"></div>
<div class="a" style="left:1px;top:81px;width:1px;height:844px;background:#ece9e6"></div>
<div class="a" style="left:1398px;top:81px;width:1px;height:844px;background:#eeebea"></div>
<div class="a" style="left:0;top:0;width:1px;height:926px;background:#3d88a3"></div>
<div class="a" style="left:1399px;top:0;width:1px;height:926px;background:#3d88a3"></div>
<div class="a" style="left:0;top:925px;width:1400px;height:1px;background:#3d88a3"></div>
<div class="a" style="left:0;top:0;width:1400px;height:1px;background:#3d88a3"></div>
</body></html>
